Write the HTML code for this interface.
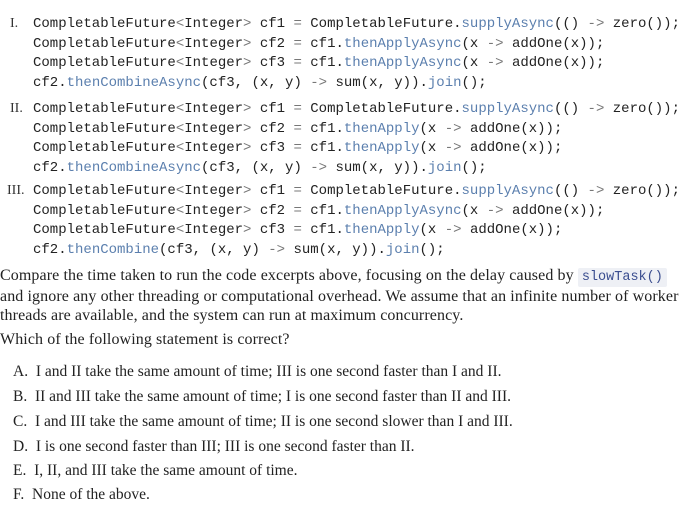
<!DOCTYPE html>
<html><head><meta charset="utf-8"><style>
body{margin:0;width:680px;height:512px;background:#fff;position:relative;overflow:hidden;color:#222}
.c{position:absolute;left:33px;font:14px/19.7px "Liberation Mono",monospace;white-space:pre;color:#222}
.c div{height:19.7px}
.m{color:#5b7fae}.g{color:#777}
.r{position:absolute;font:14px "Liberation Serif",serif;color:#333}
.t{position:absolute;left:0;font:16px "Liberation Serif",serif;white-space:nowrap;color:#222;letter-spacing:0.1px}
.o{position:absolute;left:13px;font:15.5px "Liberation Serif",serif;white-space:nowrap;color:#222}
.hl{background:#eef0f5;font:13.5px "Liberation Mono",monospace;color:#3a4d8f;padding:2px 4px;border-radius:2px;letter-spacing:0}
</style></head><body>
<span class="r" style="left:10px;top:16px">I.</span>
<div class="c" style="top:15px"><div>CompletableFuture<span class="g">&lt;</span>Integer<span class="g">&gt;</span> cf1 <span class="g">=</span> CompletableFuture.<span class="m">supplyAsync</span>(() <span class="g">-&gt;</span> zero());</div><div>CompletableFuture<span class="g">&lt;</span>Integer<span class="g">&gt;</span> cf2 <span class="g">=</span> cf1.<span class="m">thenApplyAsync</span>(x <span class="g">-&gt;</span> addOne(x));</div><div>CompletableFuture<span class="g">&lt;</span>Integer<span class="g">&gt;</span> cf3 <span class="g">=</span> cf1.<span class="m">thenApplyAsync</span>(x <span class="g">-&gt;</span> addOne(x));</div><div>cf2.<span class="m">thenCombineAsync</span>(cf3, (x, y) <span class="g">-&gt;</span> sum(x, y)).<span class="m">join</span>();</div></div>
<span class="r" style="left:10px;top:101px">II.</span>
<div class="c" style="top:100px"><div>CompletableFuture<span class="g">&lt;</span>Integer<span class="g">&gt;</span> cf1 <span class="g">=</span> CompletableFuture.<span class="m">supplyAsync</span>(() <span class="g">-&gt;</span> zero());</div><div>CompletableFuture<span class="g">&lt;</span>Integer<span class="g">&gt;</span> cf2 <span class="g">=</span> cf1.<span class="m">thenApply</span>(x <span class="g">-&gt;</span> addOne(x));</div><div>CompletableFuture<span class="g">&lt;</span>Integer<span class="g">&gt;</span> cf3 <span class="g">=</span> cf1.<span class="m">thenApply</span>(x <span class="g">-&gt;</span> addOne(x));</div><div>cf2.<span class="m">thenCombineAsync</span>(cf3, (x, y) <span class="g">-&gt;</span> sum(x, y)).<span class="m">join</span>();</div></div>
<span class="r" style="left:7px;top:183px">III.</span>
<div class="c" style="top:182px"><div>CompletableFuture<span class="g">&lt;</span>Integer<span class="g">&gt;</span> cf1 <span class="g">=</span> CompletableFuture.<span class="m">supplyAsync</span>(() <span class="g">-&gt;</span> zero());</div><div>CompletableFuture<span class="g">&lt;</span>Integer<span class="g">&gt;</span> cf2 <span class="g">=</span> cf1.<span class="m">thenApplyAsync</span>(x <span class="g">-&gt;</span> addOne(x));</div><div>CompletableFuture<span class="g">&lt;</span>Integer<span class="g">&gt;</span> cf3 <span class="g">=</span> cf1.<span class="m">thenApply</span>(x <span class="g">-&gt;</span> addOne(x));</div><div>cf2.<span class="m">thenCombine</span>(cf3, (x, y) <span class="g">-&gt;</span> sum(x, y)).<span class="m">join</span>();</div></div>
<div class="t" style="top:267px">Compare the time taken to run the code excerpts above, focusing on the delay caused by <span class="hl">slowTask()</span></div>
<div class="t" style="top:288px">and ignore any other threading or computational overhead. We assume that an infinite number of worker</div>
<div class="t" style="top:307px">threads are available, and the system can run at maximum concurrency.</div>
<div class="t" style="top:331px">Which of the following statement is correct?</div>
<div class="o" style="top:363px">A.&nbsp; I and II take the same amount of time; III is one second faster than I and II.</div>
<div class="o" style="top:388px">B.&nbsp; II and III take the same amount of time; I is one second faster than II and III.</div>
<div class="o" style="top:413px">C.&nbsp; I and III take the same amount of time; II is one second slower than I and III.</div>
<div class="o" style="top:438px">D.&nbsp; I is one second faster than III; III is one second faster than II.</div>
<div class="o" style="top:462px">E.&nbsp; I, II, and III take the same amount of time.</div>
<div class="o" style="top:486px">F.&nbsp; None of the above.</div>
</body></html>
